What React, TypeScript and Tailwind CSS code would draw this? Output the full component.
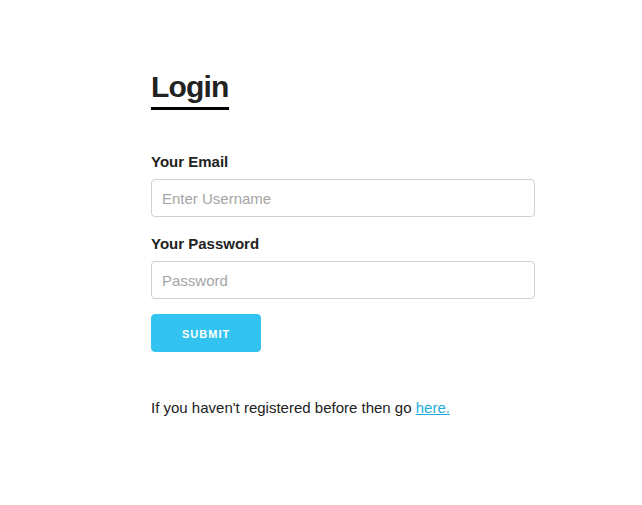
export default function App() {
  return (
    <div className="min-h-[505px] bg-white font-['Liberation_Sans',Arial,sans-serif] text-[15px] leading-[1.6] text-[#222]">
      <div className="ml-[151px] w-[384px] pt-[67px]">
        {/* Heading with underline bar */}
        <h1 className="inline-block border-b-[3px] border-black pb-[1px] text-[30px] font-bold leading-[1.3] tracking-[-0.8px] text-[#222]">
          Login
        </h1>

        <form className="mt-[40px]" onSubmit={(e) => e.preventDefault()}>
          <label className="mb-[5px] block font-bold">Your Email</label>
          <input
            type="text"
            placeholder="Enter Username"
            className="mb-[15px] box-border block h-[38px] w-full rounded-[4px] border border-[#d1d1d1] bg-white px-[10px] py-[6px] text-[15px] text-[#222] placeholder:text-[#a5a5a5] focus:outline-none"
          />

          <label className="mb-[5px] block font-bold">Your Password</label>
          <input
            type="password"
            placeholder="Password"
            className="mb-[15px] box-border block h-[38px] w-full rounded-[4px] border border-[#d1d1d1] bg-white px-[10px] py-[6px] text-[15px] text-[#222] placeholder:text-[#a5a5a5] focus:outline-none"
          />

          <button
            type="submit"
            className="box-border block h-[38px] rounded-[4px] border border-[#33c3f0] bg-[#33c3f0] px-[30px] text-[11px] font-bold uppercase leading-[38px] tracking-[1px] text-white"
          >
            Submit
          </button>
        </form>

        <p className="mt-[44px]">
          If you haven&apos;t registered before then go{" "}
          <a href="#" className="text-[#1eaedb] underline">
            here.
          </a>
        </p>
      </div>
    </div>
  );
}
